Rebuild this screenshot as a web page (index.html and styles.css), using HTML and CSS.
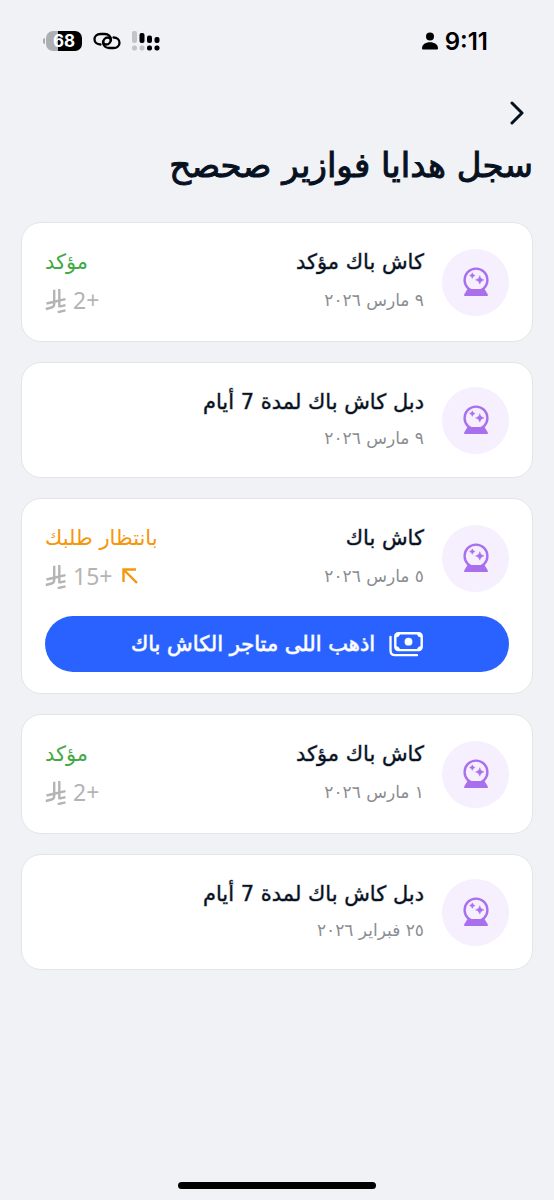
FILE: index.html
```
<!DOCTYPE html>
<html lang="ar" dir="rtl">
<head>
<meta charset="utf-8">
<meta name="viewport" content="width=device-width, initial-scale=1">
<title>سجل هدايا فوازير صحصح</title>
<link rel="stylesheet" href="styles.css">
</head>
<body>
<svg class="defs" aria-hidden="true">
  <symbol id="ball" viewBox="0 0 28 30">
    <circle cx="14" cy="13" r="11.4" fill="none" stroke="currentColor" stroke-width="2.400"/>
    <path d="M5.500 22h17l3.200 5.200c.5.900.1 1.800-.8 1.800H3.100c-.9 0-1.300-.9-.8-1.800z" fill="currentColor"/>
    <path d="M17.800 8.600q.6 3.700 4.300 4.300q-3.700.6-4.300 4.300q-.6-3.700-4.300-4.300q3.700-.6 4.300-4.300zM10.300 5.800q.5 2.300 2.800 2.800q-2.300.5-2.800 2.800q-.5-2.300-2.800-2.800q2.300-.5 2.800-2.800z" fill="currentColor" stroke="currentColor" stroke-width=".4"/>
  </symbol>
  <symbol id="riyal" viewBox="0 0 22 25">
    <path d="M9.200 1.800v14.200q0 2.800-2.600 3.500L.8 21M14.300 1v18.300M1.500 15.500L20.500 11.200M14.300 18.700L20.500 17.200M12.700 24.200L20.500 22.400" fill="none" stroke="currentColor" stroke-width="2.400"/>
  </symbol>
</svg>
<div class="screen">
  <div class="status-bar" dir="ltr">
    <div class="status-group">
      <span class="battery"><span>68</span></span>
      <svg width="28" height="18" viewBox="0 0 28 18" fill="none" stroke="#000" stroke-width="2.300" stroke-linecap="round">
        <path d="M7.500 12.500C3.800 12.500 1.500 10.200 1.500 7.300S3.800 2 7.500 2h4.300c3.700 0 6 2.300 6 5.200s-2 5.300-4.600 5.300c-2 0-3.200-1.300-3.200-3"/>
        <path d="M20.500 5.500c3.700 0 6 2.300 6 5.200S24.200 16 20.500 16h-4.300c-3.700 0-6-2.300-6-5.200s2-5.300 4.600-5.300c2 0 3.200 1.300 3.200 3"/>
      </svg>
      <svg width="28" height="20" viewBox="0 0 28 20">
        <g fill="#c3c4c7"><rect width="5" height="12" rx="2"/><rect y="14.500" width="5" height="5" rx="2"/><rect x="7.500" y="14.500" width="5" height="5" rx="2"/></g>
        <rect x="7.500" y="2" width="5" height="10" rx="2"/><rect x="15" y="4.500" width="5" height="7.500" rx="2"/><rect x="22.500" y="6" width="5" height="6" rx="2"/><rect x="15" y="14.500" width="5" height="5" rx="2"/><rect x="22.500" y="14.500" width="5" height="5" rx="2"/>
      </svg>
    </div>
    <div class="status-group clock">
      <svg width="16" height="18" viewBox="0 0 16 18"><circle cx="8" cy="4.500" r="4"/><path d="M0 16.500C0 12.500 3.500 10.300 8 10.300s8 2.200 8 6.200q0 1-1 1H1q-1 0-1-1z"/></svg>
      <time>9:11</time>
    </div>
  </div>
  <header>
    <button class="back" aria-label="رجوع"><svg width="14" height="24" viewBox="0 0 14 24" fill="none" stroke="currentColor" stroke-width="3" stroke-linecap="round" stroke-linejoin="round"><path d="M2 2l10 10L2 22"/></svg></button>
    <h1>سجل هدايا فوازير صحصح</h1>
  </header>
  <main>
    <article class="card">
      <div class="row">
        <span class="badge"><svg width="28" height="30"><use href="#ball"/></svg></span>
        <div class="info"><h2>كاش باك مؤكد</h2><p class="date">٩ مارس ٢٠٢٦</p></div>
        <div class="result"><p class="state done">مؤكد</p><p class="amount"><span>+2</span><svg width="22" height="25"><use href="#riyal"/></svg></p></div>
      </div>
    </article>
    <article class="card compact">
      <div class="row">
        <span class="badge"><svg width="28" height="30"><use href="#ball"/></svg></span>
        <div class="info"><h2>دبل كاش باك لمدة 7 أيام</h2><p class="date">٩ مارس ٢٠٢٦</p></div>
      </div>
    </article>
    <article class="card">
      <div class="row">
        <span class="badge"><svg width="28" height="30"><use href="#ball"/></svg></span>
        <div class="info"><h2>كاش باك</h2><p class="date">٥ مارس ٢٠٢٦</p></div>
        <div class="result"><p class="state pending">بانتظار طلبك</p><p class="amount"><svg class="arrow" width="16" height="16" viewBox="0 0 16 16" fill="none" stroke="currentColor" stroke-width="2.400"><path d="M1.500 14V1.500H14M2 2l13 13"/></svg><span>+15</span><svg width="22" height="25"><use href="#riyal"/></svg></p></div>
      </div>
      <button class="action">
        <svg width="34" height="25" viewBox="0 0 34 25"><path d="M1.500 5v13.500q0 4.700 4.700 4.700H28" fill="none" stroke="#fff" stroke-width="2.300" stroke-linecap="round"/><rect x="6.300" y="1.300" width="26.400" height="16.800" rx="3" fill="none" stroke="#fff" stroke-width="2.400"/><path d="M7 2h4q-.5 3-4 3.500zM32 2h-4q.5 3 4 3.500zM7 17.500h4q-.5-3-4-3.500zM32 17.500h-4q.5-3 4-3.500z" fill="#fff"/><circle cx="19.500" cy="9.700" r="3.900" fill="#fff"/></svg>
        <span>اذهب اللى متاجر الكاش باك</span>
      </button>
    </article>
    <article class="card">
      <div class="row">
        <span class="badge"><svg width="28" height="30"><use href="#ball"/></svg></span>
        <div class="info"><h2>كاش باك مؤكد</h2><p class="date">١ مارس ٢٠٢٦</p></div>
        <div class="result"><p class="state done">مؤكد</p><p class="amount"><span>+2</span><svg width="22" height="25"><use href="#riyal"/></svg></p></div>
      </div>
    </article>
    <article class="card compact">
      <div class="row">
        <span class="badge"><svg width="28" height="30"><use href="#ball"/></svg></span>
        <div class="info"><h2>دبل كاش باك لمدة 7 أيام</h2><p class="date">٢٥ فبراير ٢٠٢٦</p></div>
      </div>
    </article>
  </main>
  <div class="home-bar"></div>
</div>
</body>
</html>
```
FILE: styles.css
```
* { box-sizing: border-box; }
body {
  margin: 0;
  background: #f1f2f6;
  color: #07111f;
  font-family: "DejaVu Sans", sans-serif;
}
h1, h2, p { margin: 0; font-weight: 400; }
button { border: 0; padding: 0; font: inherit; cursor: pointer; }
svg { flex: none; display: block; }
.defs { position: absolute; width: 0; height: 0; }
.screen {
  min-height: 100vh;
  display: flex;
  flex-direction: column;
  padding: 24px 21px 11px;
}
.status-bar {
  display: flex;
  align-items: center;
  justify-content: space-between;
  height: 34px;
  padding: 0 45px 0 22px;
  color: #000;
  font-family: Inter, sans-serif;
}
.status-group { display: flex; align-items: center; gap: 11px; }
.clock { gap: 7px; font-size: 24px; font-weight: 600; }
.battery { display: flex; align-items: center; gap: 1px; }
.battery::before {
  content: "";
  width: 2px;
  height: 6px;
  border-radius: 2px 0 0 2px;
  background: #a9aaad;
}
.battery span {
  width: 36px;
  border-radius: 7px;
  background: linear-gradient(90deg, #aeafb2 32%, #000 32%);
  color: #fff;
  font-size: 17px;
  font-weight: 700;
  line-height: 20px;
  text-align: center;
}
.back {
  display: flex;
  align-items: center;
  justify-content: center;
  width: 32px;
  height: 32px;
  margin-top: 39px;
  background: none;
  color: #07111f;
}
h1 { margin-top: 12px; font-size: 34px; line-height: 48px; -webkit-text-stroke: 1px; }
main { display: flex; flex-direction: column; gap: 20px; margin-top: 33px; }
.card {
  padding: 21px 23px;
  border: 1px solid #e4e5e9;
  border-radius: 20px;
  background: #fff;
}
.row { display: flex; align-items: center; gap: 18px; }
.badge {
  flex: none;
  display: grid;
  place-items: center;
  width: 67px;
  height: 67px;
  border-radius: 50%;
  background: #f6effe;
  color: #a970ee;
}
.info { flex: 1; }
h2, .state { font-size: 21px; line-height: 36px; }
h2 { -webkit-text-stroke: 1px rgb(7 17 31 / 40%); }
.date { color: #8a8d92; font-size: 17px; line-height: 40px; }
.compact .date { line-height: 36px; }
.result { display: flex; flex-direction: column; align-items: flex-end; }
.done { color: #42a944; }
.pending { color: #f6960c; }
.amount {
  display: flex;
  align-items: center;
  gap: 6px;
  color: #b4b4b5;
  font-family: "Noto Sans", sans-serif;
  font-size: 23px;
  line-height: 40px;
}
.arrow { color: #f6960c; margin-left: 4px; }
.action {
  display: flex;
  align-items: center;
  justify-content: center;
  gap: 14px;
  width: 100%;
  height: 56px;
  margin-top: 20px;
  border-radius: 28px;
  background: #2962ff;
  color: #fff;
  font-size: 21px;
  -webkit-text-stroke: 1px rgb(255 255 255 / 70%);
}
.home-bar {
  width: 198px;
  height: 7px;
  margin: auto auto 0;
  border-radius: 4px;
  background: #000;
}
```
